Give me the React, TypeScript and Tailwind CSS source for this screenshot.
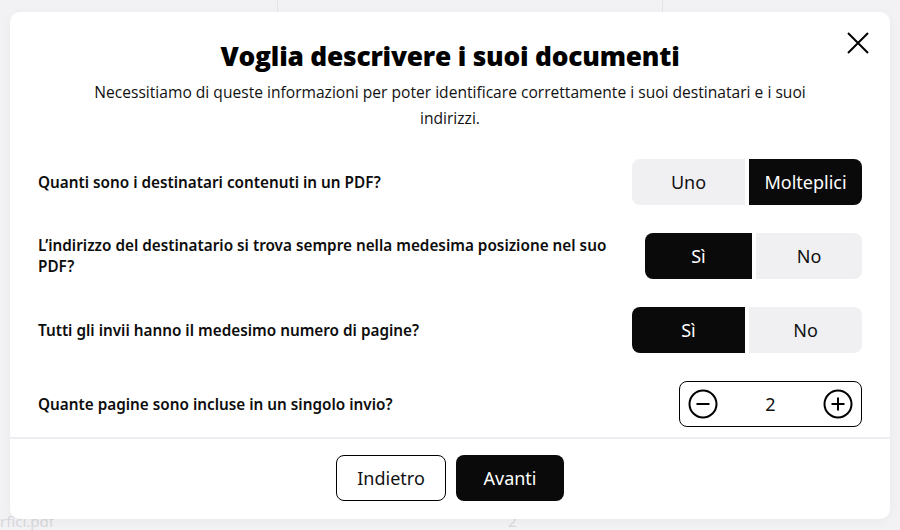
import React from "react";

const body = { fontFamily: '"Noto Sans", "Open Sans", sans-serif' };
const sub = { fontFamily: '"Open Sans", "Noto Sans", sans-serif' };

function Seg({ left, right, active, widths }: { left: string; right: string; active: 0 | 1; widths: [number, number] }) {
  return (
    <div className="flex h-[46px] shrink-0 gap-[4px]">
      <div
        className={`flex items-center justify-center rounded-l-[8px] text-[18px] ${active === 0 ? "bg-[#0a0a0a] text-white" : "bg-[#f0f0f3] text-[#111]"}`}
        style={{ width: widths[0] }}
      >
        {left}
      </div>
      <div
        className={`flex items-center justify-center rounded-r-[8px] text-[18px] ${active === 1 ? "bg-[#0a0a0a] text-white" : "bg-[#f0f0f3] text-[#111]"}`}
        style={{ width: widths[1] }}
      >
        {right}
      </div>
    </div>
  );
}

function Row({ q, children }: { q: React.ReactNode; children: React.ReactNode }) {
  return (
    <div className="flex items-center justify-between gap-6">
      <div className="text-[15.3px] font-semibold leading-[21px] text-[#0d0d0d] max-w-[590px]">{q}</div>
      {children}
    </div>
  );
}

export default function App() {
  return (
    <div className="relative w-[900px] h-[530px] overflow-hidden bg-[#f2f2f4]" style={body}>
      {/* faint background page */}
      <div className="absolute left-[277px] top-0 h-[12px] w-px bg-[#e4e4e8]" />
      <div className="absolute left-[662px] top-0 h-[12px] w-px bg-[#e4e4e8]" />
      <div className="absolute left-[0px] top-[514px] text-[15px] leading-[15px] text-[#d8d8dc]">rfici.pdf</div>
      <div className="absolute left-[508px] top-[514px] text-[15px] leading-[15px] text-[#d8d8dc]">2</div>

      <div className="absolute left-[10px] top-[12px] w-[880px] h-[507px] rounded-[10px] bg-white shadow-[0_2px_12px_rgba(0,0,0,0.04)] flex flex-col">
        <button className="absolute right-[21px] top-[20px] w-[22px] h-[22px]">
          <svg viewBox="0 0 22 22" className="w-[22px] h-[22px]">
            <path d="M1 1L21 21M21 1L1 21" stroke="#000" strokeWidth="2" />
          </svg>
        </button>

        <div className="flex flex-col items-center pt-[26px] px-[60px]">
          <h1 className="text-[26.3px] leading-[36px] font-extrabold tracking-[-0.2px] text-black" style={sub}>
            Voglia descrivere i suoi documenti
          </h1>
          <p className="mt-[5px] text-center text-[15.6px] leading-[26px] text-[#111]" style={sub}>
            Necessitiamo di queste informazioni per poter identificare correttamente i suoi destinatari e i suoi
            <br />
            indirizzi.
          </p>
        </div>

        <div className="flex flex-col gap-[28px] px-[28px] pt-[28px] pb-[10px]">
          <Row q="Quanti sono i destinatari contenuti in un PDF?">
            <Seg left="Uno" right="Molteplici" active={1} widths={[113, 113]} />
          </Row>
          <Row q="L’indirizzo del destinatario si trova sempre nella medesima posizione nel suo PDF?">
            <Seg left="Sì" right="No" active={0} widths={[107, 106]} />
          </Row>
          <Row q="Tutti gli invii hanno il medesimo numero di pagine?">
            <Seg left="Sì" right="No" active={0} widths={[113, 113]} />
          </Row>
          <Row q="Quante pagine sono incluse in un singolo invio?">
            <div className="flex h-[46px] w-[183px] items-center justify-between rounded-[8px] border border-black px-[8px]">
              <svg viewBox="0 0 30 30" className="w-[30px] h-[30px]">
                <circle cx="15" cy="15" r="13.5" fill="none" stroke="#000" strokeWidth="2" />
                <path d="M8.5 15H21.5" stroke="#000" strokeWidth="2" />
              </svg>
              <span className="text-[18px] text-[#111]">2</span>
              <svg viewBox="0 0 30 30" className="w-[30px] h-[30px]">
                <circle cx="15" cy="15" r="13.5" fill="none" stroke="#000" strokeWidth="2" />
                <path d="M8.5 15H21.5M15 8.5V21.5" stroke="#000" strokeWidth="2" />
              </svg>
            </div>
          </Row>
        </div>

        <div className="border-t-2 border-[#ededf1] flex justify-center gap-[10px] pt-[16px]">
          <button className="h-[46px] w-[110px] rounded-[8px] border border-black bg-white text-[18px] text-[#111]">
            Indietro
          </button>
          <button className="h-[46px] w-[108px] rounded-[8px] bg-[#0a0a0a] text-[18px] text-white">Avanti</button>
        </div>
      </div>
    </div>
  );
}
